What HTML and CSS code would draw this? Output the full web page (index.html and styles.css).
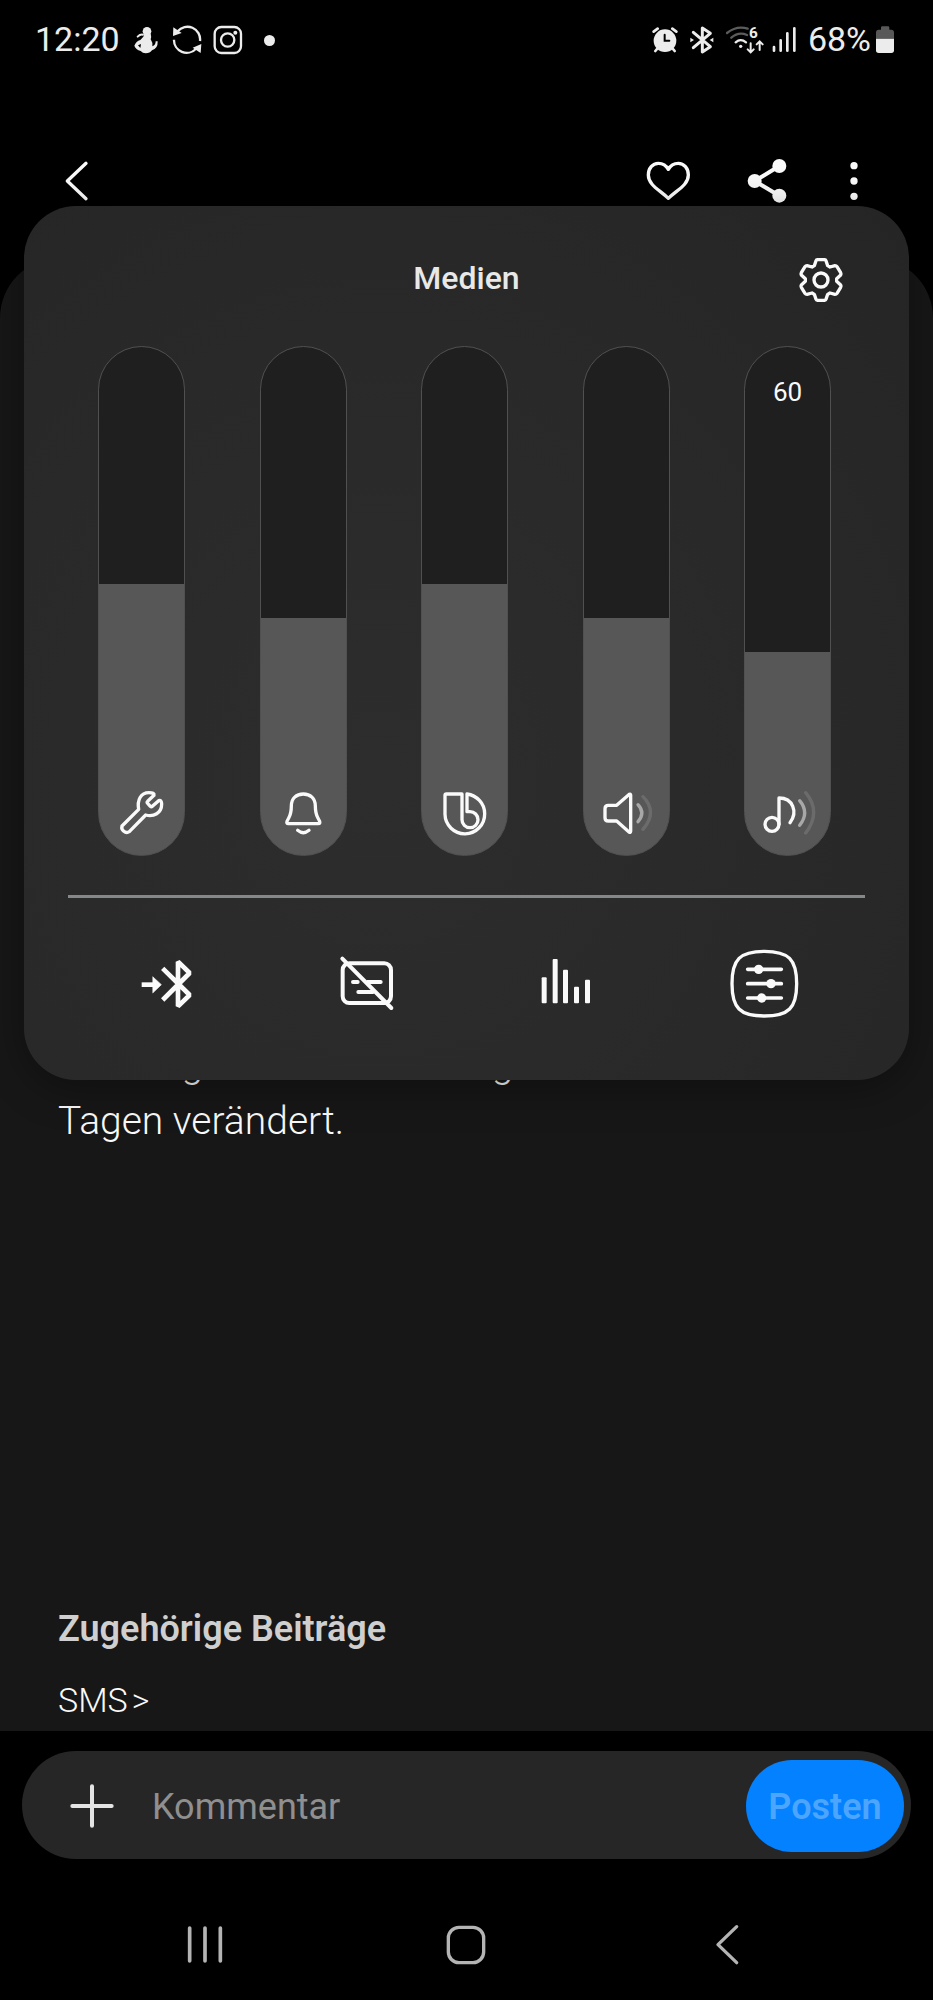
FILE: index.html
```html
<!DOCTYPE html>
<html lang="de">
<head>
<meta charset="utf-8">
<meta name="viewport" content="width=device-width, initial-scale=1">
<title>Medien</title>
<link rel="stylesheet" href="styles.css">
</head>
<body>
<div class="screen">
  <header class="status">
    <div class="status-left">
      <span class="status-text">12:20</span>
      <svg width="30" height="30" viewBox="395 75 90 90" fill="currentColor" aria-hidden="true">
        <circle cx="443" cy="94" r="13"/>
        <path d="M432 110l4-9h18q3 10 0 17 7 10 5 21 10-3 10-15h6q1 22-17 27-6 9-19 9-9 0-15-7-15-5-19-16 5-13 18-17z"/>
        <path d="M415 110q8-8 16-6" stroke="currentColor" stroke-width="6" stroke-linecap="round" fill="none"/>
        <path d="M416 136l9-4-2 12z" fill="#000"/>
      </svg>
      <svg width="30" height="30" viewBox="516 75 90 90" fill="none" stroke="currentColor" stroke-width="7" aria-hidden="true">
        <path d="M533 94a38 38 0 0 1 67 29M522 119a38 38 0 0 0 66 27"/>
        <path d="M520 82l-1 26 26-9zM604 132l-2 27-24-16z" fill="currentColor" stroke="none"/>
      </svg>
      <svg width="30" height="30" viewBox="638 75 90 90" fill="none" stroke="currentColor" stroke-width="7" aria-hidden="true">
        <rect x="643" y="81" width="79" height="78" rx="20"/>
        <circle cx="682" cy="120" r="20"/>
        <circle cx="705" cy="98" r="6" fill="currentColor" stroke="none"/>
      </svg>
      <span class="dot"></span>
    </div>
    <div class="status-right">
      <svg width="26" height="30" viewBox="555 75 78 90" aria-hidden="true" stroke="currentColor" stroke-width="8" stroke-linecap="round" fill="none">
        <circle cx="594" cy="122" r="34" fill="currentColor" stroke="none"/>
        <path d="M560 95l12-9M616 86l12 9M571 146l-6 7M617 146l6 7"/>
        <path d="M593 104v18h14" stroke="#000" stroke-width="6"/>
      </svg>
      <svg width="24" height="30" viewBox="671 75 72 90" aria-hidden="true" stroke="currentColor" stroke-width="9" stroke-linecap="round" stroke-linejoin="round" fill="none">
        <path d="M681 97l51 43-24 16V84l24 16-51 43"/>
        <path d="M672 113l11 7-11 7zM741 113l-11 7 11 7z" fill="currentColor" stroke="none"/>
      </svg>
      <svg width="70" height="30" viewBox="780 75 210 90" aria-hidden="true" stroke="currentColor" stroke-width="7" stroke-linecap="round" fill="none">
        <path d="M783 99q29-23 62-13M796 113q22-19 47-8" stroke="#5c5c5c"/>
        <path d="M809 127q15-13 31 0"/>
        <circle cx="824" cy="139" r="5" fill="currentColor" stroke="none"/>
        <text x="849" y="115" class="wifi-gen">6</text>
        <path d="M854 130v26M845 148l9 9 9-9M881 150v-25M872 133l9-9 9 9" stroke-width="6"/>
        <path d="M924 141v11M944 121v31M964 100v52M985 85v67" stroke-width="8"/>
      </svg>
      <span class="battery">
        <span class="status-text">68%</span>
        <svg width="18" height="30" viewBox="1230 75 54 90" aria-hidden="true">
          <path d="M1230 116V98q0-9 8-9h7v-6q0-4 4-4h17q4 0 4 4v6h6q8 0 8 9v18z" fill="#585858"/>
          <path d="M1230 116h54v35q0 8-8 8h-38q-8 0-8-8z" fill="currentColor"/>
        </svg>
      </span>
    </div>
  </header>

  <div class="toolbar">
    <button class="icon-btn" aria-label="Zurück">
      <svg viewBox="134 448 192 192"><path d="M257 491l-56 53 56 53" stroke-width="10"/></svg>
    </button>
    <div class="toolbar-actions">
      <button class="icon-btn" aria-label="Gefällt mir">
        <svg viewBox="511 448 192 192"><path d="M608 596C582 571 548 556 548 526c0-20 13-35 30-35 14 0 24 7 30 18 6-11 16-18 30-18 17 0 30 15 30 35 0 30-34 45-60 70z" stroke-width="10"/></svg>
      </button>
      <button class="icon-btn" aria-label="Teilen">
        <svg viewBox="807 448 192 192"><path d="M940 499l-74 45 74 44" stroke-width="12"/><g fill="currentColor" stroke="none"><circle cx="940" cy="499" r="21"/><circle cx="866" cy="544" r="21"/><circle cx="940" cy="588" r="21"/></g></svg>
      </button>
      <button class="icon-btn icon-btn-narrow" aria-label="Mehr">
        <svg viewBox="1105 448 120 192"><g fill="currentColor" stroke="none"><circle cx="1165" cy="498" r="11"/><circle cx="1165" cy="544" r="11"/><circle cx="1165" cy="590" r="11"/></g></svg>
      </button>
    </div>
  </div>

  <main class="post">
    <p class="post-text">Nutzung hat das vor wenigen<br>Tagen verändert.</p>
    <section class="related">
      <h2>Zugehörige Beiträge</h2>
      <a href="#sms">SMS<span class="chevron">&gt;</span></a>
    </section>
  </main>

  <form class="comment">
    <button type="button" class="icon-btn plus" aria-label="Anhang hinzufügen">
      <svg viewBox="181 581 192 192"><path d="M277 618v118M218 677h118" stroke-width="12"/></svg>
    </button>
    <input type="text" class="comment-input" placeholder="Kommentar" aria-label="Kommentar">
    <button type="submit" class="send" disabled>Posten</button>
  </form>

  <nav class="nav" aria-label="Systemnavigation">
    <button class="icon-btn" aria-label="Letzte Apps"><svg viewBox="0 0 192 192"><path d="M50 45v99M96 45v99M142 45v99" stroke-width="11"/></svg></button>
    <button class="icon-btn" aria-label="Startseite"><svg viewBox="0 0 192 192"><rect x="43" y="43" width="106" height="106" rx="32" stroke-width="10"/></svg></button>
    <button class="icon-btn" aria-label="Zurück"><svg viewBox="0 0 192 192"><path d="M122 41L66 95l56 54" stroke-width="10"/></svg></button>
  </nav>

  <section class="panel" aria-label="Lautstärke">
    <div class="panel-head">
      <h1>Medien</h1>
      <button class="icon-btn gear" aria-label="Einstellungen">
        <svg viewBox="-72 -72 144 144" stroke-width="10"><path d="M-20-43L-15-58Q-14-61-11-61H11Q14-61 15-58L20-43 27-39 42-43Q46-43 48-40L59-22Q61-18 59-15L47-4V4L59 15Q61 18 59 22L48 40Q46 43 42 43L27 39 20 43 15 58Q14 61 11 61H-11Q-14 61-15 58L-20 43-27 39-42 43Q-46 43-48 40L-59 22Q-61 18-59 15L-47 4V-4L-59-15Q-61-18-59-22L-48-40Q-46-43-42-43L-27-39z"/><circle r="21"/></svg>
      </button>
    </div>

    <div class="sliders">
      <label class="slider">
        <input type="range" min="0" max="15" value="8" aria-label="System" style="--level:53.33%">
        <svg viewBox="154 128 180 180"><path d="M187 257l50-50c-5-28 6-50 31-50q17 0 15 8l-19 18q-3 3 0 6l8 9q3 3 6 0l19-17q9-3 9 10c0 28-24 39-48 33l-49 50a15 15 0 0 1-22-17z"/></svg>
      </label>
      <label class="slider">
        <input type="range" min="0" max="15" value="7" aria-label="Benachrichtigungen" style="--level:46.67%">
        <svg viewBox="639 128 180 180"><path d="M694 197c0-23 15-36 36-36s36 13 36 36c0 30 6 30 13 46q2 7-4 7h-90q-6 0-4-7c7-16 13-16 13-46zM713 270q17 14 34 0"/></svg>
      </label>
      <label class="slider">
        <input type="range" min="0" max="15" value="8" aria-label="Bixby" style="--level:53.33%">
        <svg viewBox="164 128 180 180"><path d="M248 161h-47q-4 0-4 4v57a59 59 0 0 0 119-2c0-31-24-55-53-59v53h9a24 24 0 1 1-24 24z"/></svg>
      </label>
      <label class="slider">
        <input type="range" min="0" max="15" value="7" aria-label="Klingelton" style="--level:46.67%">
        <svg viewBox="648 128 180 180"><path d="M752 164q0-4-4-2l-38 33h-25q-10 0-10 10v27q0 10 10 10h25l37 33q5 3 5-2z"/><path d="M774 193q23 25 0 51" opacity=".5"/><path d="M789 169q45 46 0 98" opacity=".13"/></svg>
      </label>
      <label class="slider">
        <span class="slider-value">60</span>
        <input type="range" min="0" max="150" value="60" aria-label="Medien" style="--level:40%">
        <svg viewBox="1132 128 180 180"><circle cx="1177" cy="252" r="21"/><path d="M1198 252v-79c42 0 57 42 33 74"/><path d="M1260 181q30 36 0 74" opacity=".5"/><path d="M1278 157q48 58 0 121" opacity=".13"/></svg>
      </label>
    </div>

    <div class="actions">
      <button aria-label="Bluetooth-Ausgabe">
        <svg viewBox="214 84 216 216" stroke-width="14"><path d="M243 194h38" stroke-linecap="butt"/><path d="M277 171l25 23-25 24z" fill="currentColor" stroke-width="2"/><path d="M306 145l81 80-35 34V125l35 34-81 81" stroke-linecap="butt" stroke-linejoin="bevel"/></svg>
      </button>
      <button aria-label="Automatische Untertitel aus">
        <svg viewBox="813 84 216 216" stroke-width="12"><rect x="848" y="130" width="145" height="119" rx="20"/><path d="M879 186h14M922 186h40M895 216h44M847 116l147 148"/></svg>
      </button>
      <button aria-label="Equalizer">
        <svg viewBox="210 84 216 216"><g fill="currentColor" stroke="none"><rect x="245" y="172" width="15" height="78" rx="3"/><rect x="278" y="117" width="15" height="133" rx="3"/><rect x="309" y="149" width="15" height="101" rx="3"/><rect x="342" y="200" width="15" height="50" rx="3"/><rect x="375" y="179" width="15" height="71" rx="3"/></g></svg>
      </button>
      <button aria-label="Lautstärkeregler">
        <svg viewBox="806 82 216 216"><path d="M912 92c73 0 97 24 97 97s-24 97-97 97-97-24-97-97 24-97 97-97z" stroke-width="10"/><path d="M862 146h101M862 189h101M862 232h101" stroke-width="11"/><g fill="currentColor" stroke="none"><circle cx="895" cy="146" r="14"/><circle cx="932" cy="189" r="14"/><circle cx="904" cy="232" r="14"/></g></svg>
      </button>
    </div>
  </section>
</div>
</body>
</html>
```
FILE: styles.css
```css
* {
  box-sizing: border-box;
}

body {
  margin: 0;
  background: #000;
  color: #fafafa;
  font-family: Roboto, "Liberation Sans", sans-serif;
}

h1,
h2,
p {
  margin: 0;
}

button,
input {
  font: inherit;
  color: inherit;
  background: none;
  border: 0;
  margin: 0;
  padding: 0;
}

svg {
  display: block;
  flex: none;
}

.screen {
  position: relative;
  display: flex;
  flex-direction: column;
  min-height: 100vh;
}

/* Status bar */
.status {
  display: flex;
  justify-content: space-between;
  align-items: center;
  height: 80px;
  padding: 0 39px 0 35px;
  color: #ececec;
}

.status-left,
.status-right {
  display: flex;
  align-items: center;
  gap: 11px;
}

.status-right {
  gap: 12px;
}

.status-text {
  padding-bottom: 2px;
  font-size: 34px;
  line-height: 40px;
}

.dot {
  width: 11px;
  height: 11px;
  margin-left: 10px;
  border-radius: 50%;
  background: currentColor;
}

.wifi-gen {
  font-size: 46px;
  font-weight: 700;
  fill: currentColor;
  stroke: none;
}

.battery {
  display: flex;
  align-items: center;
  gap: 5px;
}

/* Icon buttons */
.icon-btn {
  flex: none;
  width: 64px;
  height: 64px;
}

.icon-btn-narrow {
  width: 40px;
}

.icon-btn svg,
.actions svg,
.slider svg {
  width: 100%;
  height: 100%;
  fill: none;
  stroke: currentColor;
  stroke-linecap: round;
  stroke-linejoin: round;
}

.toolbar {
  display: flex;
  justify-content: space-between;
  height: 178px;
  padding: 69px 59px 0 45px;
}

.toolbar-actions {
  display: flex;
  gap: 35px;
}

/* Post */
.post {
  flex: 1;
  display: flex;
  flex-direction: column;
  justify-content: space-between;
  padding: 778px 58px 9px;
  border-radius: 60px 60px 0 0;
  background: #171717;
}

.post-text {
  font-size: 39px;
  font-weight: 300;
  line-height: 57px;
}

.related {
  display: flex;
  flex-direction: column;
  align-items: flex-start;
  gap: 27px;
}

.related h2 {
  font-size: 36px;
  font-weight: 600;
  line-height: 44px;
  color: #cfcfcf;
}

.related a {
  font-size: 34px;
  font-weight: 300;
  line-height: 44px;
  color: inherit;
  text-decoration: none;
}

.chevron {
  margin-left: 4px;
}

/* Comment field */
.comment {
  display: flex;
  align-items: center;
  gap: 28px;
  height: 108px;
  margin: 20px 22px 31px;
  padding: 2px 7px 0 38px;
  border-radius: 54px;
  background: #262626;
}

.plus {
  color: #e4e4e4;
}

.comment-input {
  flex: 1;
  min-width: 0;
  height: 64px;
  padding-top: 2px;
  font-size: 36px;
  outline: 0;
}

.comment-input::placeholder {
  color: #8f8f8f;
  opacity: 1;
}

.send {
  width: 158px;
  height: 92px;
  padding-top: 2px;
  border-radius: 46px;
  background: #0381fe;
  color: #4ca5ff;
  font-size: 36px;
  font-weight: 600;
}

/* System navigation */
.nav {
  display: flex;
  justify-content: space-around;
  align-items: center;
  height: 110px;
  padding: 0 74px;
  color: #b4b4b4;
}

/* Volume panel floating over the page */
.panel {
  position: absolute;
  top: 206px;
  left: 24px;
  right: 24px;
  padding-top: 50px;
  border-radius: 52px;
  background: radial-gradient(ellipse at 40% 65%, #2d2d2d, #292929 55%, #252525);
  box-shadow: 0 8px 40px rgba(0, 0, 0, 0.35);
}

.panel-head {
  display: grid;
  grid-template-columns: 1fr auto 1fr;
  align-items: center;
  padding: 0 64px;
}

.panel-head h1 {
  grid-column: 2;
  padding-bottom: 4px;
  font-size: 32px;
  font-weight: 500;
  line-height: 44px;
  color: #e8e8e8;
}

.gear {
  justify-self: end;
  width: 48px;
  height: 48px;
}

.sliders {
  display: flex;
  justify-content: space-between;
  padding: 42px 78px 39px 74px;
}

.slider {
  position: relative;
  display: block;
  width: 87px;
  height: 510px;
}

.slider input {
  display: block;
  width: 100%;
  height: 100%;
  appearance: none;
  writing-mode: vertical-lr;
  direction: rtl;
  border: 1px solid #505050;
  border-radius: 44px;
  background: linear-gradient(to top, #575757 var(--level), #1f1f1f var(--level));
}

.slider input::-webkit-slider-thumb {
  appearance: none;
  width: 100%;
  height: 1px;
  background: transparent;
}

.slider svg {
  position: absolute;
  left: 13px;
  bottom: 13px;
  width: 60px;
  height: 60px;
  stroke-width: 10px;
  pointer-events: none;
}

.slider-value {
  position: absolute;
  top: 30px;
  left: 0;
  right: 0;
  font-size: 26px;
  line-height: 32px;
  text-align: center;
}

.actions {
  display: grid;
  grid-template-columns: repeat(4, 1fr);
  justify-items: center;
  margin: 0 44px;
  padding: 50px 0 60px;
  border-top: 3px solid #858888;
}

.actions button {
  width: 72px;
  height: 72px;
}
```
